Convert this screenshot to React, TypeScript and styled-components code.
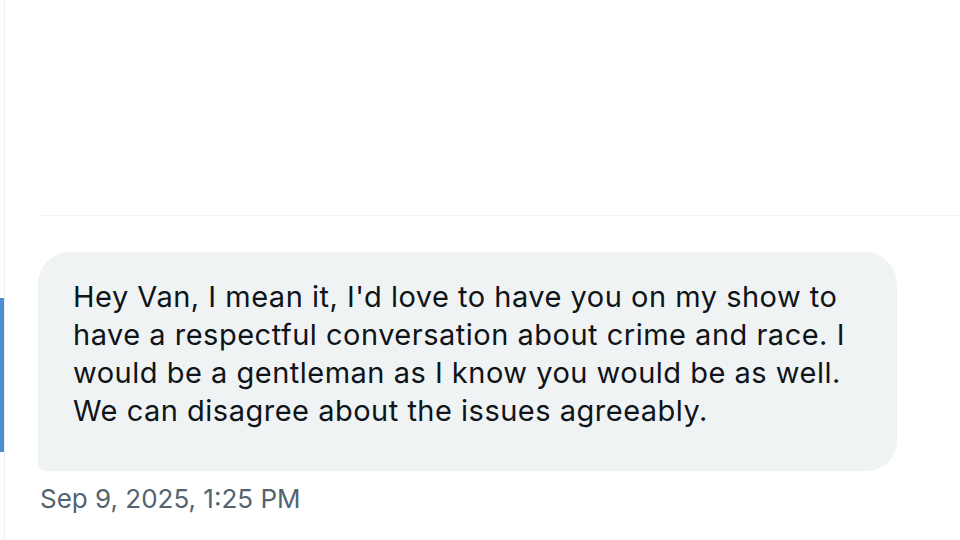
import React from 'react';
import styled, { createGlobalStyle } from 'styled-components';

const GlobalStyle = createGlobalStyle`
  html, body {
    margin: 0;
    padding: 0;
    background: #ffffff;
  }
  body {
    font-family: Inter, 'Liberation Sans', Arial, sans-serif;
  }
`;

const Page = styled.div`
  display: flex;
  width: 960px;
  height: 540px;
  overflow: hidden;
  background: #ffffff;
`;

const Rail = styled.div`
  width: 4px;
  flex-shrink: 0;
  border-right: 1px solid #eef1f3;
  display: flex;
  flex-direction: column;
`;

const ActiveMark = styled.div`
  margin-top: 298px;
  width: 4px;
  height: 154px;
  background: #4a8fd1;
`;

const Thread = styled.div`
  flex: 1;
  padding-left: 33px;
  padding-top: 215px;
  display: flex;
  flex-direction: column;
`;

const Divider = styled.div`
  height: 1px;
  background: #eff3f4;
  margin-bottom: 36px;
`;

const Bubble = styled.div`
  width: 859px;
  box-sizing: border-box;
  background: #eff3f4;
  border-radius: 32px 32px 30px 8px;
  padding: 26px 20px 41px 35px;
  color: #0f1419;
  font-size: 29px;
  line-height: 38px;
  letter-spacing: 0.5px;
  white-space: nowrap;
`;

const Timestamp = styled.div`
  margin-top: 13px;
  padding-left: 2px;
  color: #536471;
  font-size: 26px;
  line-height: 30px;
`;

const App: React.FC = () => {
  return (
    <>
      <GlobalStyle />
      <Page>
        <Rail>
          <ActiveMark />
        </Rail>
        <Thread>
          <Divider />
          <Bubble>
            Hey Van, I mean it, I'd love to have you on my show to
            <br />
            have a respectful conversation about crime and race. I
            <br />
            would be a gentleman as I know you would be as well.
            <br />
            We can disagree about the issues agreeably.
          </Bubble>
          <Timestamp>Sep 9, 2025, 1:25 PM</Timestamp>
        </Thread>
      </Page>
    </>
  );
};

export default App;
